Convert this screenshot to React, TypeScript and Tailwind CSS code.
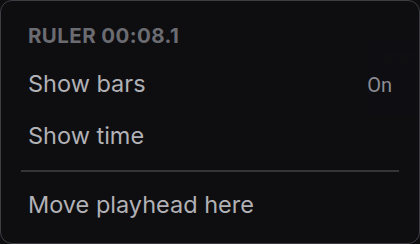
import React from "react";

const items = [
  { id: "bars", label: "Show bars", value: "On" },
  { id: "time", label: "Show time", value: "" },
];

export default function App() {
  return (
    <div
      className="relative w-[420px] h-[244px] bg-[#0e0e11] overflow-hidden"
      style={{ fontFamily: "Inter, 'Noto Sans', sans-serif" }}
    >
      {/* content behind the translucent menu */}
      <div className="absolute left-[366px] top-[38px] w-[60px] h-[78px] bg-[#111115]">
        <span className="absolute left-[17px] top-[7px] text-[17px] font-bold text-[#1d1d22]">Voc</span>
      </div>

      <div className="relative h-full rounded-[12px] border-[1.5px] border-[#3d3d44] bg-[#0f0f12]/95 px-[20px] pt-[23px]">
        <div className="px-[7px] h-[24px] leading-[24px] text-[20.5px] font-bold tracking-[0.02em] text-[#6b6b72]">
          RULER 00:08.1
        </div>

        <div className="mt-[9.5px]">
          {items.map((item) => (
            <div key={item.id} className="flex items-center justify-between h-[52px] px-[7px]">
              <span className="text-[23.5px] leading-[28px] text-[#b1b1b6]">{item.label}</span>
              {item.value && (
                <span
                  className="mt-[2px] text-[20px] leading-[24px] text-[#8c8c92]"
                  style={{ fontFamily: "Roboto, sans-serif" }}
                >
                  {item.value}
                </span>
              )}
            </div>
          ))}
        </div>

        <div className="mt-[8px] h-[2px] bg-[#34343a]" />

        <div className="flex items-center h-[52px] mt-[7.5px] px-[7px]">
          <span className="text-[23.5px] leading-[28px] text-[#b1b1b6]">Move playhead here</span>
        </div>
      </div>
    </div>
  );
}
